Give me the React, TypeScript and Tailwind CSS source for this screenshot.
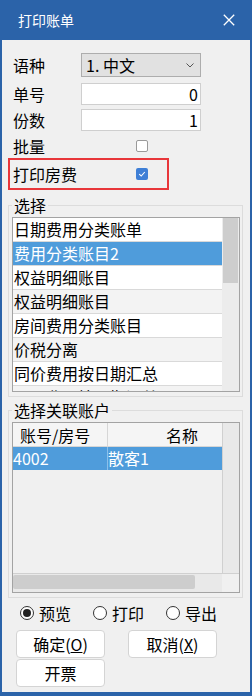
const items = [
  "日期费用分类账单",
  "费用分类账目2",
  "权益明细账目",
  "权益明细账目",
  "房间费用分类账目",
  "价税分离",
  "同价费用按日期汇总",
  "同价费用按日期汇总",
];

const Check = ({ checked }: { checked?: boolean }) =>
  checked ? (
    <span className="flex h-[12px] w-[12px] items-center justify-center rounded-[2px] bg-[#3f7fd6]">
      <svg width="8" height="8" viewBox="0 0 8 8">
        <path d="M1.2 4.2L3.2 6L6.8 2" fill="none" stroke="white" strokeWidth="1.1" />
      </svg>
    </span>
  ) : (
    <span className="h-[12px] w-[12px] rounded-[2px] border border-[#9a9a9a] bg-white" />
  );

const Radio = ({ label, checked }: { label: string; checked?: boolean }) => (
  <div className="flex w-[73px] items-center gap-[5px]">
    <span className="flex h-[14px] w-[14px] items-center justify-center rounded-full border border-[#333] bg-white">
      {checked && <span className="h-[8px] w-[8px] rounded-full bg-[#222]" />}
    </span>
    <span>{label}</span>
  </div>
);

const Btn = ({ children }: { children: React.ReactNode }) => (
  <button className="flex h-[28px] w-[89px] items-center justify-center rounded-[4px] border border-[#d4d4d4] bg-white text-[16px] leading-none">
    {children}
  </button>
);

export default function App() {
  return (
    <div className="flex h-[696px] w-[252px] flex-col bg-[#2b63a9] font-[family-name:'Noto_Sans_CJK_SC',sans-serif] text-black">
      <div className="flex h-[40px] shrink-0 items-center justify-between pl-[18px] pr-[17px] text-[14px] text-white">
        <span>打印账单</span>
        <svg width="12" height="12" viewBox="0 0 12 12">
          <path d="M0.8 0.8L11.2 11.2M11.2 0.8L0.8 11.2" stroke="white" strokeWidth="1.3" />
        </svg>
      </div>

      <div className="mx-[2px] mb-[4px] flex flex-1 flex-col bg-[#f0f0f0] text-[16px] leading-[20px]">
        <div className="mt-[13px] flex h-[24px] items-center pl-[11px]">
          <span className="w-[68px]">语种</span>
          <div className="flex h-[24px] w-[120px] items-center justify-between border border-[#adadad] bg-[#e1e1e1] pl-[4px] pr-[6px]">
            <span>1. 中文</span>
            <svg width="8" height="5" viewBox="0 0 8 5">
              <path d="M0.5 0.5L4 4L7.5 0.5" fill="none" stroke="#555" strokeWidth="1" />
            </svg>
          </div>
        </div>
        <div className="mt-[6px] flex h-[22px] items-center pl-[11px]">
          <span className="w-[68px]">单号</span>
          <div className="flex h-[22px] w-[120px] items-center justify-end border border-[#cfcfcf] bg-white pr-[2px]">0</div>
        </div>
        <div className="mt-[4px] flex h-[22px] items-center pl-[11px]">
          <span className="w-[68px]">份数</span>
          <div className="flex h-[22px] w-[120px] items-center justify-end border border-[#cfcfcf] bg-white pr-[2px]">1</div>
        </div>
        <div className="mt-[3px] flex h-[24px] items-center pl-[11px]">
          <span className="w-[123px]">批量</span>
          <Check />
        </div>
        <div className="ml-[6px] flex h-[32px] w-[161px] items-center border-2 border-[#e8363a] pl-[3px]">
          <span className="w-[123px]">打印房费</span>
          <Check checked />
        </div>

        <fieldset className="mt-[6px] ml-[6px] w-[235px] border border-[#dcdcdc] pb-[4px] pl-[3px] pr-[2px]">
          <legend className="h-[18px] pl-[2px] pr-[2px] leading-[18px]">选择</legend>
          <div className="mt-[3px] flex h-[175px] w-[228px] border border-[#a3a3a3] bg-white">
            <div className="flex-1 overflow-hidden">
              {items.map((t, i) => (
                <div
                  key={i}
                  className={`h-[24px] border-b border-[#d9d9d9] pl-[1px] leading-[23px] whitespace-nowrap ${
                    i === 1 ? "bg-[#4f9cdb] text-white" : i % 2 ? "bg-[#f3f3f3]" : "bg-white"
                  }`}
                >
                  {t}
                </div>
              ))}
            </div>
            <div className="w-[17px] shrink-0 bg-[#ececec]">
              <div className="mx-[1px] h-[65px] bg-[#cdcdcd]" />
            </div>
          </div>
        </fieldset>

        <fieldset className="mt-[4px] ml-[6px] w-[235px] border border-[#dcdcdc] pb-[4px] pl-[3px] pr-[2px]">
          <legend className="h-[18px] pl-[2px] pr-[2px] leading-[18px]">选择关联账户</legend>
          <div className="mt-[3px] flex h-[171px] w-[228px] flex-col border border-[#a3a3a3] bg-[#f0f0f0]">
            <div className="flex flex-1">
              <div className="flex-1">
                <div className="flex h-[24px] border-b border-[#d6d6d6] bg-[#f5f5f5]">
                  <div className="w-[95px] border-r border-[#d6d6d6] pl-[7px] leading-[24px]">账号/房号</div>
                  <div className="flex-1 pl-[58px] leading-[24px]">名称</div>
                </div>
                <div className="flex h-[23px] bg-[#4f9cdb] text-white">
                  <div className="w-[95px] border-r border-[#8cc0ea] leading-[23px]">4002</div>
                  <div className="flex-1 leading-[23px]">散客1</div>
                </div>
              </div>
              <div className="w-[17px] shrink-0 border-l border-[#d0d0d0] bg-[#e9e9e9]" />
            </div>
            <div className="flex h-[19px] shrink-0 border-t border-[#d0d0d0]">
              <div className="flex-1 bg-[#e9e9e9] pt-[1px]">
                <div className="h-[14px] w-[182px] rounded-[2px] bg-[#cdcdcd]" />
              </div>
              <div className="w-[17px] bg-[#f0f0f0]" />
            </div>
          </div>
        </fieldset>

        <div className="mt-[5px] flex h-[20px] items-center pl-[18px]">
          <Radio label="预览" checked />
          <Radio label="打印" />
          <Radio label="导出" />
        </div>

        <div className="mt-[7px] flex gap-[23px] pl-[14px]">
          <Btn>
            确定(<span className="underline">O</span>)
          </Btn>
          <Btn>
            取消(<span className="underline">X</span>)
          </Btn>
        </div>
        <div className="mt-[1px] pl-[14px]">
          <Btn>开票</Btn>
        </div>
      </div>
    </div>
  );
}
